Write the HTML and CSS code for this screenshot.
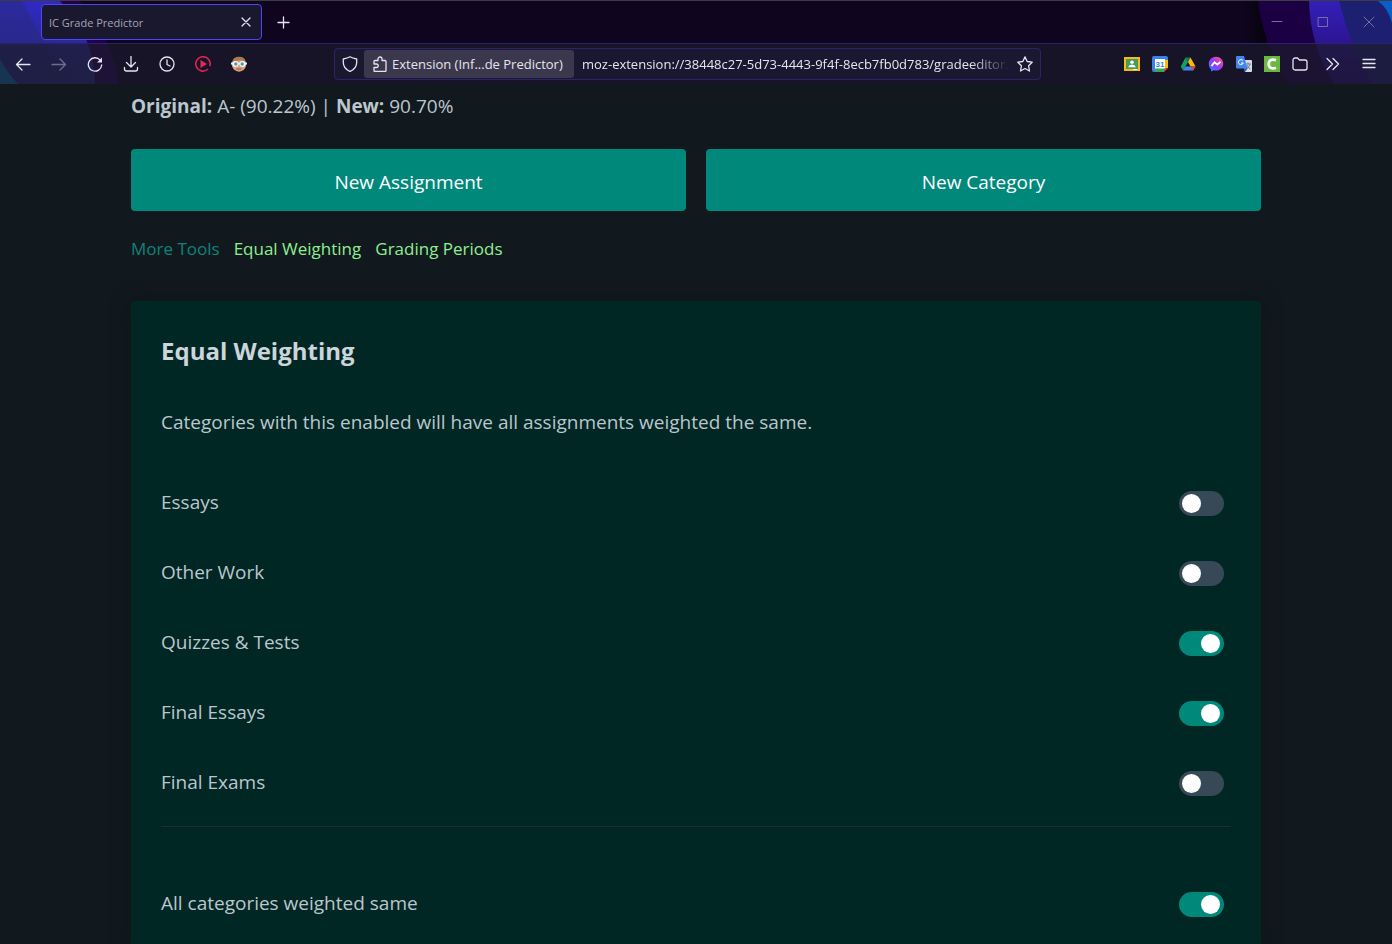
FILE: index.html
```html
<!DOCTYPE html>
<html lang="en">
<head>
<meta charset="utf-8">
<meta name="viewport" content="width=device-width, initial-scale=1">
<title>IC Grade Predictor</title>
<link rel="stylesheet" href="styles.css">
</head>
<body>
<header class="chrome">
  <svg class="art art-left" width="130" height="83" viewBox="0 0 130 83" aria-hidden="true">
    <defs>
      <linearGradient id="blueLeft" x1="0" y1="0" x2="0" y2="1"><stop offset="0" stop-color="#2b2a9c"/><stop offset="1" stop-color="#26267c"/></linearGradient>
      <linearGradient id="brightLeft" x1="0" y1="0" x2="0" y2="1"><stop offset="0" stop-color="#3029c4"/><stop offset=".5" stop-color="#29299c"/><stop offset="1" stop-color="#262a84"/></linearGradient>
    </defs>
    <path d="M0 0H80Q112 38 119 83H0Z" fill="#22004e"/>
    <path d="M0 0H60Q95 36 95 83H0Z" fill="url(#brightLeft)"/>
    <path d="M0 0H22Q42 42 76 83H0Z" fill="url(#blueLeft)"/>
    <path d="M0 58Q6 70 18 83H0Z" fill="#0a70b0"/>
  </svg>
  <svg class="art art-right" width="150" height="83" viewBox="0 0 150 83" aria-hidden="true">
    <defs>
      <linearGradient id="brightRight" x1="0" y1="0" x2="0" y2="1"><stop offset="0" stop-color="#341fb8"/><stop offset="1" stop-color="#250a70"/></linearGradient>
      <linearGradient id="shade" x1="0" y1="0" x2="1" y2="0"><stop offset="0" stop-color="#05040c" stop-opacity="0"/><stop offset="1" stop-color="#05040c"/></linearGradient>
    </defs>
    <path d="M0 0H24V43H0Z" fill="url(#shade)"/>
    <path d="M16 0Q21 44 48 83H150V0Z" fill="#1c0044"/>
    <path d="M67 0Q68 44 92 83H150V0Z" fill="url(#brightRight)"/>
    <path d="M97 0Q108 44 130 83H150V0Z" fill="#1d2070"/>
    <path d="M136 0Q146 7 150 22V0Z" fill="#0660c8"/>
  </svg>

  <div class="tabbar">
    <div class="tab">
      <span class="tab-title">IC Grade Predictor</span>
      <button class="tab-close" aria-label="Close tab"><svg width="10" height="10" viewBox="0 0 10 10"><path d="M1 1l8 8M9 1l-8 8"/></svg></button>
    </div>
    <button class="new-tab" aria-label="New tab"><svg width="13" height="13" viewBox="0 0 13 13"><path d="M6.500 1v11M1 6.500h11"/></svg></button>
    <div class="window-controls">
      <button aria-label="Minimize"><svg width="12" height="12" viewBox="0 0 12 12"><path d="M1 5.500h10"/></svg></button>
      <button aria-label="Maximize"><svg width="12" height="12" viewBox="0 0 12 12"><path d="M1.500 1.500h9v9h-9z"/></svg></button>
      <button aria-label="Close"><svg width="12" height="12" viewBox="0 0 12 12"><path d="M1 1l10 10M11 1L1 11"/></svg></button>
    </div>
  </div>

  <div class="toolbar">
    <div class="nav">
      <button aria-label="Back"><svg width="16" height="16" viewBox="0 0 16 16"><path d="M15 8.500H1.500M7 3L1.500 8.500 7 14"/></svg></button>
      <button class="is-off" aria-label="Forward"><svg width="16" height="16" viewBox="0 0 16 16"><path d="M1 8.500h13.500M9 3l5.500 5.500L9 14"/></svg></button>
      <button aria-label="Reload"><svg width="16" height="16" viewBox="0 0 16 16"><path d="M13.200 4.200A6.700 6.700 0 1 0 14.700 9"/><path class="solid" d="M15 1.500v5H10z"/></svg></button>
      <button aria-label="Downloads"><svg width="16" height="16" viewBox="0 0 16 16"><path d="M8 .5v10M3.500 6.500L8 11l4.500-4.500M1.500 11.500v1.500a2 2 0 0 0 2 2h9a2 2 0 0 0 2-2v-1.500"/></svg></button>
      <button aria-label="History"><svg width="16" height="16" viewBox="0 0 16 16"><circle cx="8" cy="8" r="7"/><path d="M8 4v4.500l3 1.500"/></svg></button>
      <button aria-label="Video player"><svg width="16" height="16" viewBox="0 0 16 16"><path d="M12.500 13.500A7.200 7.200 0 1 1 15 9.500" stroke="#dc2450" stroke-width="1.600"/><path d="M5.500 4l6.500 4-6.500 4z" fill="#e8265a" stroke="none"/></svg></button>
      <button aria-label="Profile">
        <svg class="plain" width="16" height="16" viewBox="0 0 16 16"><circle cx="8" cy="8.500" r="7.200" fill="#d9a07a"/><path d="M1.200 6Q2 .8 8 .8T14.800 6Q11 3.800 8 4.500T1.200 6Z" fill="#a77b4f"/><path d="M0 6.500h16v2H0z" fill="#e4eef2"/><circle cx="4.500" cy="8" r="3" fill="#f2fafc"/><circle cx="11.500" cy="8" r="3" fill="#f2fafc"/><circle cx="4.800" cy="8" r="1.700" fill="#4a9cae"/><circle cx="11.200" cy="8" r="1.700" fill="#4a9cae"/><path d="M5.500 13h5" stroke="#8e4f3c"/></svg>
      </button>
    </div>

    <div class="urlbar">
      <button class="shield" aria-label="Tracking protection"><svg width="16" height="16" viewBox="0 0 16 16"><path d="M8 .8C6 2 3.500 2.600 1.300 3v3.500C1.300 10.500 3.500 13.500 8 15.500c4.500-2 6.700-5 6.700-9V3C12.500 2.600 10 2 8 .8Z"/></svg></button>
      <button class="identity">
        <svg width="16" height="16" viewBox="0 0 16 16"><path d="M6 4.500V3a2 2 0 0 1 4 0v1.500h3a1 1 0 0 1 1 1v9a1 1 0 0 1-1 1H3a1 1 0 0 1-1-1v-3h2.500a1.700 1.700 0 0 0 0-3.500H2V5.500a1 1 0 0 1 1-1z"/></svg>
        <span>Extension (Inf...de Predictor)</span>
      </button>
      <input class="address" type="text" aria-label="Address" value="moz-extension://38448c27-5d73-4443-9f4f-8ecb7fb0d783/gradeeditor.html" readonly>
      <button class="star" aria-label="Bookmark this page"><svg width="16" height="16" viewBox="0 0 16 16"><path d="M8 .9l2.200 4.600 5 .7-3.600 3.600.9 5.200L8 12.500 3.500 15l.9-5.200L.8 6.200l5-.7z"/></svg></button>
    </div>

    <div class="extensions">
      <button aria-label="Classroom"><svg class="plain" width="16" height="16" viewBox="0 0 16 16"><path d="M0 1h16v14H0z" fill="#f8bb10"/><path d="M2 3h12v10H2z" fill="#459a5c"/><circle cx="8" cy="6.300" r="1.800" fill="#fff"/><path d="M4 11.200Q5 8.600 8 8.600t4 2.600z" fill="#fff"/><path d="M9 13h4v1H9z" fill="#fff3c4"/></svg></button>
      <button aria-label="Calendar"><svg class="plain" width="16" height="16" viewBox="0 0 16 16"><path d="M2 0h12a2 2 0 0 1 2 2v2h-4V3H3v13H2a2 2 0 0 1-2-2V2a2 2 0 0 1 2-2z" fill="#3c80ea"/><path d="M12 4h4v8h-4z" fill="#fbbc04"/><path d="M3 12h9v4H3z" fill="#34a853"/><path d="M12 12h4l-4 4z" fill="#ea4335"/><path d="M3 3h10v9.500H3z" fill="#fff"/><text x="8" y="11" class="day">31</text></svg></button>
      <button aria-label="Drive"><svg class="plain" width="16" height="16" viewBox="0 0 16 16"><path d="M5.500 1.500L8 6 3 14.500.8 10.500z" fill="#12a260"/><path d="M5.500 1.500h5L8 6z" fill="#118245"/><path d="M10.500 1.500l5 9h-5L8 6z" fill="#fdba08"/><path d="M5.300 10.500H15.500l-2.500 4H3z" fill="#4383ed"/><path d="M10.500 10.500h5l-2.500 4z" fill="#e84335"/></svg></button>
      <button aria-label="Messenger"><svg class="plain" width="16" height="16" viewBox="0 0 16 16"><defs><linearGradient id="msg" x1="0" y1="1" x2="1" y2="0"><stop offset="0" stop-color="#168cff"/><stop offset=".5" stop-color="#a034fb"/><stop offset="1" stop-color="#ff626c"/></linearGradient></defs><path d="M8 .8c4 0 7.200 2.900 7.200 6.900S12 14.600 8 14.600c-.8 0-1.500 0-2.200-.3L3 15.500v-2.200C1.500 12 .8 10 .8 7.700.8 3.700 4 .8 8 .8Z" fill="url(#msg)"/><path d="M3.500 10L6.500 6.300l2.800 2.200 3.200-2.600" fill="none" stroke="#fff" stroke-width="1.800"/></svg></button>
      <button aria-label="Translate"><svg class="plain" width="16" height="16" viewBox="0 0 16 16"><path d="M6 4h9a1 1 0 0 1 1 1v10a1 1 0 0 1-1 1H9z" fill="#d8dce0"/><path d="M9 8h6M12 6.500V8M14 8q-1 4-4 5M11 9q1 3 3.500 4" fill="none" stroke="#6b7f8b"/><path d="M1 0h7l3.500 12.500H1a1 1 0 0 1-1-1V1a1 1 0 0 1 1-1z" fill="#4486f0"/><path d="M7.500 12.500h4L9 16z" fill="#2855bc"/><path d="M7 4.700A2.500 2.500 0 1 0 7.300 7H5" fill="none" stroke="#fff"/></svg></button>
      <button aria-label="Coupons"><svg class="plain" width="16" height="16" viewBox="0 0 16 16"><path d="M0 0h16v16H0z" fill="#69b83f"/><path d="M12 4.200C8.500 2.800 4.700 3.600 4.700 8s3.800 5.200 7.300 3.800" fill="none" stroke="#fff" stroke-width="2.800"/></svg></button>
      <button aria-label="Bookmarks"><svg width="16" height="16" viewBox="0 0 16 16"><path d="M1 4a2 2 0 0 1 2-2h2.500l2 2H13a2 2 0 0 1 2 2v6a2 2 0 0 1-2 2H3a2 2 0 0 1-2-2z"/></svg></button>
      <button class="more" aria-label="More tools"><svg width="16" height="16" viewBox="0 0 16 16"><path d="M3 2.500L8.500 8 3 13.500M9 2.500L14.500 8 9 13.500"/></svg></button>
      <button class="menu" aria-label="Application menu"><svg width="16" height="16" viewBox="0 0 16 16"><path d="M2 3.500h12M2 7.500h12M2 11.500h12"/></svg></button>
    </div>
  </div>
</header>

<main class="page">
  <div class="container">
    <p class="summary"><strong>Original:</strong> A- (90.22%) | <strong>New:</strong> 90.70%</p>
    <div class="actions">
      <button>New Assignment</button>
      <button>New Category</button>
    </div>
    <nav class="tools">
      <a class="tools-more" href="#more">More Tools</a>
      <a href="#equal">Equal Weighting</a>
      <a href="#periods">Grading Periods</a>
    </nav>
    <section class="card" id="equal">
      <h2>Equal Weighting</h2>
      <p>Categories with this enabled will have all assignments weighted the same.</p>
      <div class="rows">
        <label class="row">Essays <input type="checkbox" role="switch"></label>
        <label class="row">Other Work <input type="checkbox" role="switch"></label>
        <label class="row">Quizzes &amp; Tests <input type="checkbox" role="switch" checked></label>
        <label class="row">Final Essays <input type="checkbox" role="switch" checked></label>
        <label class="row">Final Exams <input type="checkbox" role="switch"></label>
      </div>
      <hr>
      <label class="row">All categories weighted same <input type="checkbox" role="switch" checked></label>
    </section>
  </div>
</main>
</body>
</html>
```
FILE: styles.css
```css
* { box-sizing: border-box; }

body {
  margin: 0;
  height: 100vh;
  display: flex;
  flex-direction: column;
  background: #11191f;
  color: #bbc6ce;
  font-family: "Open Sans", "Noto Sans", sans-serif;
}

button {
  font: inherit;
  color: inherit;
  border: 0;
  padding: 0;
  background: none;
}

/* Browser chrome */
.chrome {
  position: relative;
  flex: none;
  background: #10051f;
  border-top: 1px solid #3d3b43;
  color: #e6e4ee;
  font-size: 13px;
}

.chrome button {
  display: flex;
  align-items: center;
  justify-content: center;
}

.chrome svg { flex: none; }

.chrome button svg:not(.plain) {
  fill: none;
  stroke: currentColor;
  stroke-width: 1.3;
  stroke-linecap: round;
  stroke-linejoin: round;
}

.chrome button .solid { fill: currentColor; stroke: none; }

.day {
  font: bold 8px "Liberation Sans", sans-serif;
  fill: #3c80ea;
  text-anchor: middle;
}

.art { position: absolute; top: 0; }
.art-left { left: 0; }
.art-right { right: 0; }

.tabbar {
  position: relative;
  display: flex;
  align-items: center;
  height: 43px;
  padding-left: 41px;
  border-bottom: 1px solid #2a2270;
}

.tab {
  display: flex;
  align-items: center;
  width: 221px;
  height: 36px;
  padding: 0 7px;
  border: 1px solid #4b46f0;
  border-radius: 4px;
  background: #19182e;
  color: #a6a4b3;
  font-size: 11px;
}

.tab-title { flex: 1; }
.tab-close { width: 16px; height: 24px; color: #e6e4ee; }
.new-tab { width: 43px; height: 36px; }
.window-controls { display: flex; margin-left: auto; color: #77709f; }
.window-controls button { width: 46px; height: 42px; }
.chrome .window-controls button svg { stroke-width: 1; }

.toolbar {
  position: relative;
  display: flex;
  align-items: center;
  height: 40px;
  padding: 0 4px 0 5px;
  background: rgba(28, 27, 44, 0.7);
}

.nav, .extensions { display: flex; flex: none; }
.nav button { width: 36px; height: 32px; }
.nav .is-off { opacity: 0.4; }
.extensions button { width: 28px; height: 32px; }
.extensions .more { width: 36px; }
.extensions .menu { width: 38px; }

.urlbar {
  flex: 1;
  min-width: 0;
  display: flex;
  align-items: center;
  height: 32px;
  margin: 0 77px;
  border: 1px solid #2a2468;
  border-radius: 4px;
  background: #1a1730;
}

.shield { width: 29px; height: 28px; }
.star { width: 30px; height: 28px; }

.chrome .identity {
  flex: none;
  justify-content: flex-start;
  gap: 4px;
  width: 210px;
  height: 28px;
  padding: 0 8px;
  border-radius: 3px;
  background: #3b384d;
  white-space: nowrap;
}

.address {
  flex: 1;
  min-width: 0;
  margin-left: 8px;
  padding: 0;
  border: 0;
  background: none;
  color: inherit;
  font: inherit;
  -webkit-mask-image: linear-gradient(to left, transparent, #000 40px);
  mask-image: linear-gradient(to left, transparent, #000 40px);
}

/* Page */
.page {
  flex: 1;
  min-height: 0;
  overflow-y: auto;
  scrollbar-width: none;
  font-size: 19px;
  line-height: 30px;
}

.container {
  max-width: 1170px;
  margin: 0 auto;
  padding: 7px 20px 40px;
}

.page p, .page h2 { margin: 0; }

.actions {
  display: grid;
  grid-template-columns: 1fr 1fr;
  gap: 20px;
  margin-top: 28px;
}

.actions button {
  padding: 18px 20px 14px;
  border-radius: 4px;
  background: #00897b;
  color: #fff;
}

.tools {
  display: flex;
  gap: 14px;
  margin-top: 23px;
  font-size: 17px;
}

.tools a { color: #90ee90; text-decoration: none; }
.tools .tools-more { color: #0c8478; }

.card {
  margin-top: 37px;
  padding: 30px;
  border-radius: 4px;
  background: #002723;
  box-shadow: 0 2px 20px rgba(16, 20, 20, 0.9);
}

.page h2 {
  margin-bottom: 36px;
  color: #cdd5db;
  font-size: 24px;
  line-height: 40px;
}

.rows {
  display: grid;
  gap: 40px;
  margin-top: 50px;
}

.row {
  display: flex;
  align-items: center;
  justify-content: space-between;
}

.row input {
  appearance: none;
  width: 45px;
  height: 25px;
  margin: 2px 7px 0 0;
  padding: 3px;
  border-radius: 13px;
  background: #374956;
}

.row input::before {
  content: "";
  display: block;
  width: 19px;
  height: 19px;
  border-radius: 50%;
  background: #fff;
}

.row input:checked { background: #00897b; }
.row input:checked::before { margin-left: 19px; }

.card hr {
  margin: 29px 0 61px;
  border: 0;
  border-top: 1px solid #1f2e34;
}
```
